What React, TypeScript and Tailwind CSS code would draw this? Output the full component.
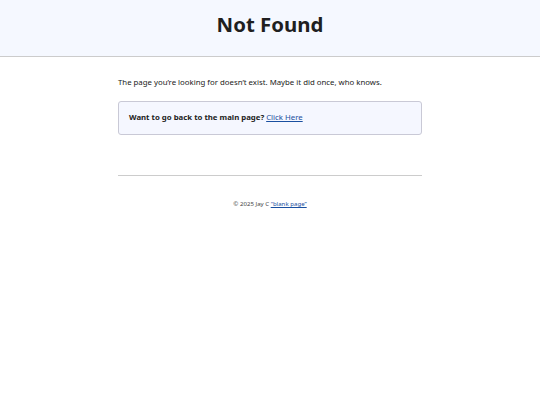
export default function App() {
  return (
    <div className="min-h-screen bg-white text-[#222] [font-family:'Noto_Sans',sans-serif]">
      <header className="flex h-[57px] items-center justify-center border-b border-[#ccc] bg-[#f5f8ff] pb-[8px]">
        <h1 className="text-[20.4px] font-bold leading-none text-[#1f1f1f]">Not Found</h1>
      </header>
      <main className="mx-auto w-[304px] pt-[19px]">
        <p className="text-[7.8px] leading-[12px] text-[#222]">
          The page you’re looking for doesn’t exist. Maybe it did once, who knows.
        </p>
        <div className="mt-[13px] flex h-[34px] items-center rounded-[3px] border border-[#c9c9d6] bg-[#f5f7ff] px-[10px] text-[7.8px]">
          <span className="font-bold">Want to go back to the main page?</span>
          <a href="#" className="ml-[2px] text-[#1a4fa0] underline">Click Here</a>
        </div>
        <hr className="mt-[40px] border-t border-[#ccc]" />
        <footer className="pt-[23px] text-center text-[6.1px] text-[#444]">
          © 2025 Jay C <a href="#" className="text-[#1a4fa0] underline">“blank page”</a>
        </footer>
      </main>
    </div>
  );
}
